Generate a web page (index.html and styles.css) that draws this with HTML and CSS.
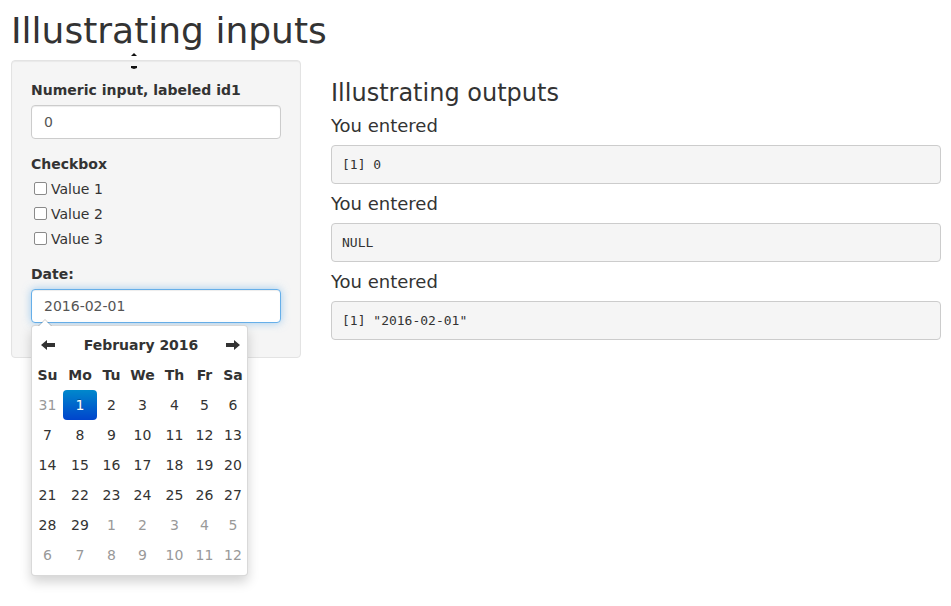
FILE: index.html
```html
<!DOCTYPE html>
<html>
<head>
<meta charset="utf-8">
<link rel="stylesheet" href="styles.css">
</head>
<body>
<div class="page">
  <h1 class="title">Illustrating inputs</h1>
  <div class="layout">
    <aside class="sidebar">
      <div class="well">
        <div class="form-group">
          <label class="control-label">Numeric input, labeled id1</label>
          <input class="form-control" type="text" value="0">
        </div>
        <div class="form-group">
          <label class="control-label">Checkbox</label>
          <div class="options">
            <label class="check"><input type="checkbox"><span>Value 1</span></label>
            <label class="check"><input type="checkbox"><span>Value 2</span></label>
            <label class="check"><input type="checkbox"><span>Value 3</span></label>
          </div>
        </div>
        <div class="form-group">
          <label class="control-label">Date:</label>
          <input class="form-control focused" type="text" value="2016-02-01">
        </div>
      </div>
    </aside>
    <main class="main">
      <h3 class="out-title">Illustrating outputs</h3>
      <h4 class="out-label">You entered</h4>
      <pre class="out">[1] 0</pre>
      <h4 class="out-label">You entered</h4>
      <pre class="out">NULL</pre>
      <h4 class="out-label">You entered</h4>
      <pre class="out">[1] "2016-02-01"</pre>
    </main>
  </div>
  <div class="datepicker">
    <div class="cal">
      <div class="cal-row">
        <div class="cell nav"><svg width="14" height="10" viewBox="0 0 14 10"><path d="M0 5 L6 0 L6 3 L14 3 L14 7 L6 7 L6 10 Z" fill="#333"/></svg></div>
        <div class="cell month">February 2016</div>
        <div class="cell nav"><svg width="14" height="10" viewBox="0 0 14 10"><path d="M14 5 L8 0 L8 3 L0 3 L0 7 L8 7 L8 10 Z" fill="#333"/></svg></div>
      </div>
      <div class="cal-row dow">
        <div class="cell">Su</div><div class="cell">Mo</div><div class="cell">Tu</div><div class="cell">We</div><div class="cell">Th</div><div class="cell">Fr</div><div class="cell">Sa</div>
      </div>
      <div class="cal-row"><div class="cell old">31</div><div class="cell active">1</div><div class="cell">2</div><div class="cell">3</div><div class="cell">4</div><div class="cell">5</div><div class="cell">6</div></div>
      <div class="cal-row"><div class="cell">7</div><div class="cell">8</div><div class="cell">9</div><div class="cell">10</div><div class="cell">11</div><div class="cell">12</div><div class="cell">13</div></div>
      <div class="cal-row"><div class="cell">14</div><div class="cell">15</div><div class="cell">16</div><div class="cell">17</div><div class="cell">18</div><div class="cell">19</div><div class="cell">20</div></div>
      <div class="cal-row"><div class="cell">21</div><div class="cell">22</div><div class="cell">23</div><div class="cell">24</div><div class="cell">25</div><div class="cell">26</div><div class="cell">27</div></div>
      <div class="cal-row"><div class="cell">28</div><div class="cell">29</div><div class="cell new">1</div><div class="cell new">2</div><div class="cell new">3</div><div class="cell new">4</div><div class="cell new">5</div></div>
      <div class="cal-row"><div class="cell new">6</div><div class="cell new">7</div><div class="cell new">8</div><div class="cell new">9</div><div class="cell new">10</div><div class="cell new">11</div><div class="cell new">12</div></div>
    </div>
  </div>
  <svg class="cursor-mark" width="8" height="18" viewBox="0 0 8 18">
    <path d="M1 4 L4 1 L7 4 Z" fill="#111"/>
    <path d="M1 14 L7 14 L7 16 L4 17 L1 16 Z" fill="#111"/>
  </svg>
</div>
</body>
</html>
```

FILE: styles.css
```css
* { box-sizing: border-box; }

body {
  margin: 0;
  font-family: "DejaVu Sans", Verdana, sans-serif;
  font-size: 14px;
  line-height: 20px;
  color: #333;
  background: #fff;
}

.page {
  position: relative;
  display: flow-root;
  padding: 0 10px 0 11px;
  min-height: 606px;
}

.title {
  font-size: 36px;
  font-weight: normal;
  line-height: 39px;
  margin: 11px 0 10px;
}

.layout {
  display: flex;
  gap: 30px;
  align-items: flex-start;
}

.sidebar {
  flex: 0 0 290px;
}

.well {
  background: #f5f5f5;
  border: 1px solid #e3e3e3;
  border-radius: 4px;
  box-shadow: inset 0 1px 1px rgba(0, 0, 0, 0.05);
  padding: 19px;
}

.form-group {
  margin-bottom: 15px;
}

.control-label {
  display: block;
  font-weight: bold;
  margin-bottom: 5px;
}

.form-control {
  display: block;
  width: 100%;
  height: 34px;
  padding: 6px 12px;
  font-family: inherit;
  font-size: 14px;
  line-height: 20px;
  color: #555;
  background: #fff;
  border: 1px solid #ccc;
  border-radius: 4px;
  box-shadow: inset 0 1px 1px rgba(0, 0, 0, 0.075);
  outline: none;
}

.form-control.focused {
  border-color: #66afe9;
  box-shadow: inset 0 1px 1px rgba(0, 0, 0, 0.075), 0 0 8px rgba(102, 175, 233, 0.6);
}

.options {
  display: flex;
  flex-direction: column;
  gap: 5px;
}

.check {
  display: flex;
  align-items: flex-start;
  line-height: 20px;
}

.check input {
  appearance: none;
  -webkit-appearance: none;
  width: 13px;
  height: 13px;
  margin: 3px 4px 0 3px;
  border: 1px solid #8a8a8a;
  border-radius: 2px;
  background: #fff;
  flex: none;
}

.datepicker {
  position: absolute;
  top: 325px;
  left: 31px;
  width: 217px;
  padding: 4px 0 5px;
  background: #fff;
  border: 1px solid rgba(0, 0, 0, 0.15);
  border-radius: 4px;
  box-shadow: 0 6px 12px rgba(0, 0, 0, 0.175);
  z-index: 10;
}

.datepicker::before {
  content: "";
  position: absolute;
  top: -7px;
  left: 6px;
  border-left: 7px solid transparent;
  border-right: 7px solid transparent;
  border-bottom: 7px solid rgba(0, 0, 0, 0.2);
}

.datepicker::after {
  content: "";
  position: absolute;
  top: -6px;
  left: 7px;
  border-left: 6px solid transparent;
  border-right: 6px solid transparent;
  border-bottom: 6px solid #fff;
}

.cal {
  display: grid;
  grid-template-columns: 31px 34px 29px 33px 31px 29px 28px;
  grid-auto-rows: 30px;
}

.cal-row {
  display: contents;
}

.cell {
  display: flex;
  align-items: center;
  justify-content: center;
  border-radius: 4px;
  white-space: nowrap;
}

.cell.month {
  grid-column: span 5;
  font-weight: bold;
}

.dow .cell {
  font-weight: bold;
}

.cell.old,
.cell.new {
  color: #999;
}

.cell.active {
  color: #fff;
  background: linear-gradient(to bottom, #0088cc, #0044cc);
  text-shadow: 0 -1px 0 rgba(0, 0, 0, 0.25);
}

.main {
  flex: 1 1 auto;
  min-width: 0;
}

.out-title {
  font-size: 24px;
  font-weight: normal;
  line-height: 26px;
  margin: 20px 0 10px;
}

.out-label {
  font-size: 18px;
  font-weight: normal;
  line-height: 19px;
  margin: 0 0 10px;
}

.out {
  font-family: "DejaVu Sans Mono", monospace;
  font-size: 13px;
  line-height: 18px;
  padding: 10px 10px 9px;
  margin: 0 0 10px;
  color: #333;
  background: #f5f5f5;
  border: 1px solid #ccc;
  border-radius: 4px;
  white-space: pre-wrap;
}

.cursor-mark {
  position: absolute;
  left: 130px;
  top: 52px;
}
```
